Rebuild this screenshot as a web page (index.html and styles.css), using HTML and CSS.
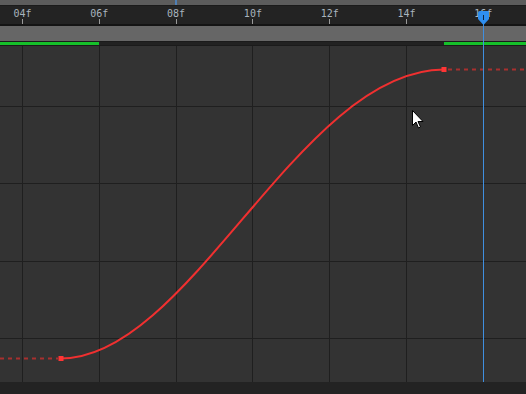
FILE: index.html
```html
<!DOCTYPE html>
<html lang="en">
<head>
  <meta charset="UTF-8">
  <title>Graph Editor</title>
  <link rel="stylesheet" href="styles.css">
</head>
<body>
  <div class="editor">
    <div class="top-strip"><span class="scroll-mark"></span></div>

    <div class="ruler">
      <div class="tick"><span class="label">04f</span><span class="mark"></span></div>
      <div class="tick"><span class="label">06f</span><span class="mark"></span></div>
      <div class="tick"><span class="label">08f</span><span class="mark"></span></div>
      <div class="tick"><span class="label">10f</span><span class="mark"></span></div>
      <div class="tick"><span class="label">12f</span><span class="mark"></span></div>
      <div class="tick"><span class="label">14f</span><span class="mark"></span></div>
      <div class="tick"><span class="label">16f</span><span class="mark"></span></div>
    </div>

    <div class="work-bar"></div>

    <div class="range-track">
      <span class="range range-in"></span>
      <span class="range-gap"></span>
      <span class="range range-out"></span>
    </div>

    <svg class="graph" width="526" height="336" viewBox="0 0 526 336">
      <!-- grid -->
      <g stroke="#1f1f1f" stroke-width="1">
        <line x1="22.5" y1="0" x2="22.5" y2="336"/>
        <line x1="99.5" y1="0" x2="99.5" y2="336"/>
        <line x1="176.5" y1="0" x2="176.5" y2="336"/>
        <line x1="252.5" y1="0" x2="252.5" y2="336"/>
        <line x1="329.5" y1="0" x2="329.5" y2="336"/>
        <line x1="406.5" y1="0" x2="406.5" y2="336"/>
        <line x1="0" y1="60.5" x2="526" y2="60.5"/>
        <line x1="0" y1="137.5" x2="526" y2="137.5"/>
        <line x1="0" y1="215.5" x2="526" y2="215.5"/>
        <line x1="0" y1="292.5" x2="526" y2="292.5"/>
      </g>

      <!-- hold lines before and after the keys -->
      <g stroke="#a8302f" stroke-width="2" stroke-dasharray="4 4">
        <line x1="0" y1="312.5" x2="58" y2="312.5"/>
        <line x1="448" y1="23.5" x2="526" y2="23.5"/>
      </g>

      <!-- value curve -->
      <path d="M61 312.5 C 190 312.5, 300 23.5, 444 23.5" fill="none" stroke="#f03030" stroke-width="2"/>
      <rect x="58.5" y="310" width="5" height="5" fill="#ff3535"/>
      <rect x="441.5" y="21" width="5" height="5" fill="#ff3535"/>

      <!-- mouse pointer -->
      <path d="M412.5 64.5 L412.5 79.5 L416 76 L418.5 82 L420.5 81 L418 75.5 L423 75.5 Z" fill="#ffffff" stroke="#000000" stroke-width="1"/>
    </svg>

    <div class="bottom-strip"></div>

    <div class="playhead">
      <svg class="playhead-head" width="11" height="14" viewBox="0 0 11 14">
        <path d="M1.5 0 H9.5 Q11 0 11 1.5 V8 L5.5 14 L0 8 V1.5 Q0 0 1.5 0 Z" fill="#2f8ff0"/>
        <rect x="5" y="4" width="1" height="5" fill="#10243a"/>
      </svg>
    </div>
  </div>
</body>
</html>
```

FILE: styles.css
```css
/* Reset */
body, html {
  margin: 0;
  padding: 0;
  background-color: #333333;
  font-family: "DejaVu Sans Mono", "Liberation Mono", monospace;
}

.editor {
  position: relative;
  width: 526px;
  height: 394px;
  overflow: hidden;
}

.top-strip {
  height: 5px;
  background-color: #5c5c5c;
  border-bottom: 1px solid #1b1b1b;
  position: relative;
}

.scroll-mark {
  position: absolute;
  left: 175px;
  top: 0;
  width: 2px;
  height: 5px;
  background-color: #4f7fb5;
}

.ruler {
  display: flex;
  height: 18px;
  background-color: #232323;
  border-bottom: 2px solid #141414;
  padding-left: 0;
  margin-left: -15.9px;
}

.tick {
  flex: 0 0 76.8px;
  display: flex;
  flex-direction: column;
  align-items: center;
}

.label {
  font-size: 10px;
  line-height: 10px;
  height: 13px;
  padding-top: 3px;
  box-sizing: border-box;
  color: #a9b4be;
}

.mark {
  width: 1px;
  height: 5px;
  background-color: #9a9a9a;
}

.work-bar {
  height: 15px;
  background-color: #666666;
  border-bottom: 1px solid #1b1b1b;
}

.range-track {
  display: flex;
  height: 3px;
  background-color: #222222;
  border-bottom: 1px solid #1b1b1b;
}

.range {
  background-color: #16c02a;
}

.range-in {
  width: 99px;
}

.range-gap {
  flex: 1;
}

.range-out {
  width: 82px;
}

.graph {
  display: block;
}

.bottom-strip {
  height: 12px;
  background-color: #232323;
}

.playhead {
  position: absolute;
  left: 483px;
  top: 11px;
  width: 1px;
  height: 371px;
  background-color: #3f8fe0;
}

.playhead-head {
  position: absolute;
  left: -5px;
  top: 0;
  display: block;
}
```
